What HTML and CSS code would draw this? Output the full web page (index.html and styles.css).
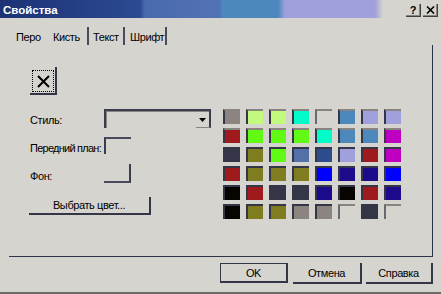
FILE: index.html
```html
<!DOCTYPE html>
<html lang="ru">
<head>
<meta charset="utf-8">
<title>Свойства</title>
<link rel="stylesheet" href="styles.css">
</head>
<body>
<div class="dialog">
  <div class="titlebar">
    <span class="title">Свойства</span>
    <div class="tb-btns">
      <span class="tb-btn tb-help">?</span>
      <span class="tb-btn tb-close"><svg width="9" height="8" viewBox="0 0 9 8"><path d="M1 0.5 L8 7.5 M8 0.5 L1 7.5" stroke="#000" stroke-width="1.6" fill="none"/></svg></span>
    </div>
  </div>

  <div class="tabs">
    <span class="tab t1">Перо</span>
    <span class="tab t2">Кисть</span>
    <span class="tab t3">Текст</span>
    <span class="tab t4">Шрифт</span>
  </div>

  <div class="panel">
    <div class="left">
      <div class="pat-btn">
        <div class="focus">
          <svg width="13" height="13" viewBox="0 0 13 13"><path d="M1 1 L12 12 M12 1 L1 12" stroke="#000" stroke-width="2" fill="none"/></svg>
        </div>
      </div>
      <div class="row row-style">
        <span class="lbl">Стиль:</span>
        <div class="combo">
          <div class="combo-btn"><svg width="7" height="4" viewBox="0 0 7 4"><path d="M0 0 H7 L3.5 4 Z" fill="#000"/></svg></div>
        </div>
      </div>
      <div class="row row-fg">
        <span class="lbl">Передний план:</span>
        <div class="swatch sw-fg"></div>
      </div>
      <div class="row row-bg">
        <span class="lbl">Фон:</span>
        <div class="swatch sw-bg"></div>
      </div>
      <div class="btn btn-pick">Выбрать цвет...</div>
    </div>

    <div class="grid">
      <span class="cell c-mauve"></span><span class="cell c-lime"></span><span class="cell c-lime"></span><span class="cell c-aqua"></span><span class="cell empty"></span><span class="cell c-steel"></span><span class="cell c-lav"></span><span class="cell c-lav"></span>
      <span class="cell c-red"></span><span class="cell c-green"></span><span class="cell c-green"></span><span class="cell c-green"></span><span class="cell c-aqua"></span><span class="cell c-steel"></span><span class="cell c-steel"></span><span class="cell c-mag"></span>
      <span class="cell c-slate"></span><span class="cell c-olive"></span><span class="cell c-green"></span><span class="cell c-blue2"></span><span class="cell c-navy"></span><span class="cell c-lav"></span><span class="cell c-red"></span><span class="cell c-mag"></span>
      <span class="cell c-red"></span><span class="cell c-olive"></span><span class="cell c-olive"></span><span class="cell c-olive"></span><span class="cell c-blue"></span><span class="cell c-indigo"></span><span class="cell c-indigo"></span><span class="cell c-blue"></span>
      <span class="cell c-black"></span><span class="cell c-red"></span><span class="cell c-slate"></span><span class="cell c-slate"></span><span class="cell c-indigo"></span><span class="cell c-black"></span><span class="cell c-red"></span><span class="cell c-indigo"></span>
      <span class="cell c-black"></span><span class="cell c-olive"></span><span class="cell c-olive"></span><span class="cell c-mauve"></span><span class="cell c-mauve"></span><span class="cell empty"></span><span class="cell c-slate"></span><span class="cell empty"></span>
    </div>
  </div>

  <div class="actions">
    <span class="btn btn-ok">OK</span>
    <span class="btn btn-cancel">Отмена</span>
    <span class="btn btn-help">Справка</span>
  </div>
  <div class="bottom-edge"></div>
</div>
</body>
</html>
```

FILE: styles.css
```css
* { box-sizing: border-box; }

html, body {
  margin: 0;
  padding: 0;
}

body {
  width: 441px;
  height: 294px;
  overflow: hidden;
  background: #d6d4ce;
  font-family: "Liberation Sans", Arial, sans-serif;
  font-size: 11px;
  letter-spacing: -0.4px;
  color: #000;
}

.dialog {
  width: 441px;
  height: 294px;
  display: flex;
  flex-direction: column;
}

/* Title bar */
.titlebar {
  height: 18px;
  display: flex;
  align-items: flex-start;
  justify-content: space-between;
  background: linear-gradient(to right,
    #1c3274 0px, #2c4a92 140px, #4a6aae 145px, #5272b4 220px,
    #4c88bc 222px, #4c88bc 278px, #a0a0dc 285px, #a0a0dc 375px,
    #d6d4ce 383px, #d6d4ce 441px);
}

.title {
  color: #fff;
  font-weight: bold;
  font-size: 11.5px;
  letter-spacing: 0;
  line-height: 18px;
  padding-left: 3px;
  padding-top: 1px;
}

.tb-btns {
  display: flex;
  gap: 2px;
  padding-top: 4px;
  padding-right: 3px;
}

.tb-btn {
  width: 15px;
  height: 13px;
  display: flex;
  align-items: center;
  justify-content: center;
  background: #d6d4ce;
  border-right: 1px solid #404040;
  border-bottom: 1px solid #404040;
  box-shadow: inset -1px -1px 0 #8a8480;
  font-weight: bold;
  font-size: 11px;
  letter-spacing: 0;
  line-height: 12px;
}

/* Tabs */
.tabs {
  margin-top: 9px;
  height: 18px;
  display: flex;
  padding-left: 16px;
}

.tab {
  height: 18px;
  display: flex;
  align-items: center;
  padding-top: 1px;
}

.t1 { width: 37px; }
.t2 { width: 36px; border-right: 2px solid #4a4a5a; }
.t3 { width: 36px; padding-left: 4px; border-right: 2px solid #4a4a5a; }
.t4 { width: 42px; padding-left: 5px; border-right: 2px solid #4a4a5a; }

/* Panel */
.panel {
  margin-left: 9px;
  width: 424px;
  height: 212px;
  border-right: 1px solid #30344a;
  border-bottom: 1px solid #30344a;
  display: flex;
}

.left {
  width: 214px;
  padding-left: 21px;
  padding-top: 22px;
  display: flex;
  flex-direction: column;
  align-items: flex-start;
}

.pat-btn {
  width: 27px;
  height: 28px;
  border-right: 2px solid #343648;
  border-bottom: 2px solid #343648;
  padding: 3px 1px 1px 2px;
}

.focus {
  width: 22px;
  height: 22px;
  border: 1px dotted #000;
  display: flex;
  align-items: center;
  justify-content: center;
}

.row {
  display: flex;
  align-items: flex-start;
}

.lbl {
  width: 74px;
  flex-shrink: 0;
  line-height: 13px;
  white-space: nowrap;
}

.row-style { margin-top: 14px; }
.row-style .lbl { margin-top: 5px; }
.row-fg { margin-top: 9px; }
.row-fg .lbl { margin-top: 5px; letter-spacing: -0.75px; }
.row-bg { margin-top: 9px; }
.row-bg .lbl { margin-top: 6px; }

.combo {
  width: 107px;
  height: 19px;
  border-top: 2px solid #3c3c50;
  border-left: 2px solid #3c3c50;
  box-shadow: inset 1px 1px 0 #8a8480;
  display: flex;
  justify-content: flex-end;
  align-items: flex-start;
}

.combo-btn {
  width: 15px;
  height: 17px;
  border-right: 2px solid #3c3c50;
  border-bottom: 1px solid #8a8480;
  display: flex;
  align-items: center;
  justify-content: center;
  padding-top: 1px;
}

.swatch { width: 27px; flex-shrink: 0; }

.sw-fg {
  height: 17px;
  border-top: 2px solid #4a4a5c;
  border-left: 2px solid #3c3c50;
}

.sw-bg {
  height: 19px;
  border-right: 2px solid #3c3c50;
  border-bottom: 2px solid #4a4a5c;
}

.btn {
  display: flex;
  align-items: center;
  justify-content: center;
  white-space: nowrap;
}

.btn-pick {
  margin-top: 14px;
  margin-left: -1px;
  width: 122px;
  height: 18px;
  border-right: 2px solid #343648;
  border-bottom: 2px solid #343648;
}

/* Color grid */
.grid {
  margin-top: 64px;
  display: grid;
  grid-template-columns: repeat(8, 17px);
  grid-auto-rows: 15px;
  column-gap: 6px;
  row-gap: 4px;
  align-content: start;
}

.cell {
  display: block;
  border-left: 2px solid #343648;
  border-top: 2px solid #343648;
}

.cell:nth-child(-n+16) { border-top-color: #8a8480; }
.cell.empty { background: transparent; border-top-color: #8a8480; border-left-color: #6a6870; }

.c-mauve { background: #8c8480; }
.c-lime { background: #c2fa7e; }
.c-aqua { background: #00fcc8; }
.c-steel { background: #4c88bc; }
.c-lav { background: #a0a0dc; }
.c-red { background: #9e1a1c; }
.c-green { background: #60fa14; }
.c-mag { background: #c000c0; }
.c-slate { background: #343648; }
.c-olive { background: #807c20; }
.c-blue2 { background: #5470a8; }
.c-navy { background: #2c4c8c; }
.c-blue { background: #0000ff; }
.c-indigo { background: #1c0c8c; }
.c-black { background: #080400; }

/* Bottom buttons */
.actions {
  margin-top: 6px;
  height: 21px;
  display: flex;
  justify-content: flex-end;
  padding-right: 8px;
}

.btn-ok {
  width: 68px;
  height: 20px;
  border: 1px solid #343648;
  border-right-width: 2px;
  border-bottom-width: 2px;
}

.btn-cancel {
  margin-left: 5px;
  width: 69px;
  height: 21px;
  border-right: 2px solid #343648;
  border-bottom: 2px solid #343648;
}

.btn-help {
  margin-left: 4px;
  width: 67px;
  height: 21px;
  border-right: 2px solid #343648;
  border-bottom: 2px solid #343648;
}

.bottom-edge {
  margin-top: auto;
  height: 2px;
  background: #6e6a6a;
}
```
